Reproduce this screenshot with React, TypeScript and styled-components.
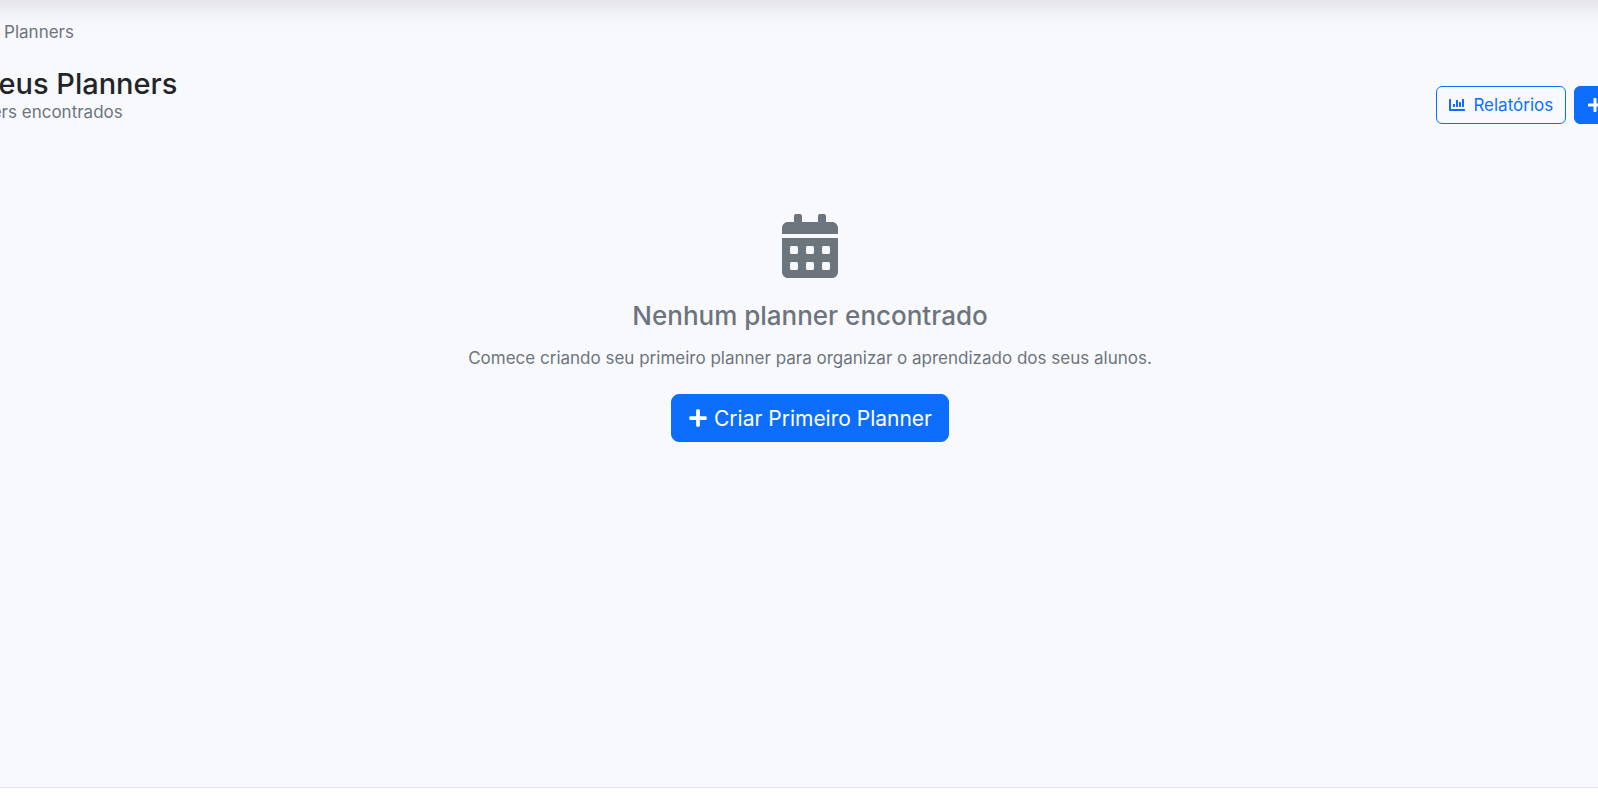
import React from "react";
import styled, { createGlobalStyle } from "styled-components";
import { FaCalendarAlt, FaChartBar, FaPlus } from "react-icons/fa";

const GlobalStyle = createGlobalStyle`
  *, *::before, *::after { box-sizing: border-box; }
  body {
    margin: 0;
    background: #ffffff;
    color: #212529;
    font-family: Inter, "Open Sans", sans-serif;
    font-size: 17px;
    line-height: 24px;
    overflow-x: hidden;
  }
  h1, h4, p { margin: 0; }
`;

const Shell = styled.div`
  display: flex;
  flex-direction: column;
  min-height: 100vh;
  overflow: hidden;
`;

const Main = styled.main`
  flex: 1;
  padding: 20px 0 48px;
  background: linear-gradient(#e7e6ea 0, #e9e9ed 5px, #eff1f4 12px, #f4f6fa 20px, #f8f9fd 36px);
`;

/* The content strip runs past both edges of the window. */
const Content = styled.div`
  margin: 0 -90px 0 -68px;
`;

const Breadcrumb = styled.nav`
  display: flex;
  justify-content: flex-end;
  gap: 8px;
  width: 142px;
  margin-bottom: 24px;
  color: #6c757d;
  white-space: nowrap;
`;

const Crumb = styled.a`
  color: #0d6efd;
  text-decoration: none;
`;

const PageHeader = styled.header`
  display: flex;
  align-items: flex-end;
  justify-content: space-between;
  margin: 0 -44px 90px 0;
`;

const TitleBlock = styled.div`
  white-space: nowrap;
`;

const Title = styled.h1`
  display: flex;
  align-items: center;
  gap: 12px;
  font-size: 29px;
  font-weight: 500;
  line-height: 32px;
`;

const Muted = styled.p`
  color: #6c757d;
`;

const Actions = styled.div`
  display: flex;
  gap: 8px;
`;

const Button = styled.button<{ $outline?: boolean; $large?: boolean }>`
  display: inline-flex;
  align-items: center;
  gap: ${(p) => (p.$large ? 6 : 8)}px;
  height: ${(p) => (p.$large ? 48 : 38)}px;
  padding: 0 ${(p) => (p.$large ? 16 : 12)}px;
  border: 1px solid #0d6efd;
  border-radius: ${(p) => (p.$large ? 8 : 6)}px;
  background: ${(p) => (p.$outline ? "transparent" : "#0d6efd")};
  color: ${(p) => (p.$outline ? "#0d6efd" : "#ffffff")};
  font-family: inherit;
  font-size: ${(p) => (p.$large ? 21 : 17)}px;
  white-space: nowrap;
  cursor: pointer;

  svg { font-size: ${(p) => (p.$large ? 20 : 16)}px; }
`;

const Empty = styled.section`
  display: flex;
  flex-direction: column;
  align-items: center;
  color: #6c757d;
  text-align: center;

  > svg { margin-bottom: 24px; }
`;

const EmptyTitle = styled.h4`
  margin-bottom: 16px;
  font-size: 26px;
  font-weight: 500;
  line-height: 28px;
`;

const EmptyText = styled(Muted)`
  margin-bottom: 24px;
`;

const Footer = styled.footer`
  height: 17px;
  border-top: 1px solid #e3e3ea;
  background: #ffffff;
`;

export default function App() {
  return (
    <Shell>
      <GlobalStyle />
      <Main>
        <Content>
          <Breadcrumb aria-label="breadcrumb">
            <Crumb href="#">Dashboard</Crumb>
            <span>/</span>
            <span>Planners</span>
          </Breadcrumb>
          <PageHeader>
            <TitleBlock>
              <Title>
                <FaCalendarAlt size={28} />
                Meus Planners
              </Title>
              <Muted>0 planners encontrados</Muted>
            </TitleBlock>
            <Actions>
              <Button type="button" $outline>
                <FaChartBar />
                Relatórios
              </Button>
              <Button type="button">
                <FaPlus />
                Novo Planner
              </Button>
            </Actions>
          </PageHeader>
          <Empty>
            <FaCalendarAlt size={64} />
            <EmptyTitle>Nenhum planner encontrado</EmptyTitle>
            <EmptyText>
              Comece criando seu primeiro planner para organizar o aprendizado dos seus alunos.
            </EmptyText>
            <Button type="button" $large>
              <FaPlus />
              Criar Primeiro Planner
            </Button>
          </Empty>
        </Content>
      </Main>
      <Footer />
    </Shell>
  );
}
